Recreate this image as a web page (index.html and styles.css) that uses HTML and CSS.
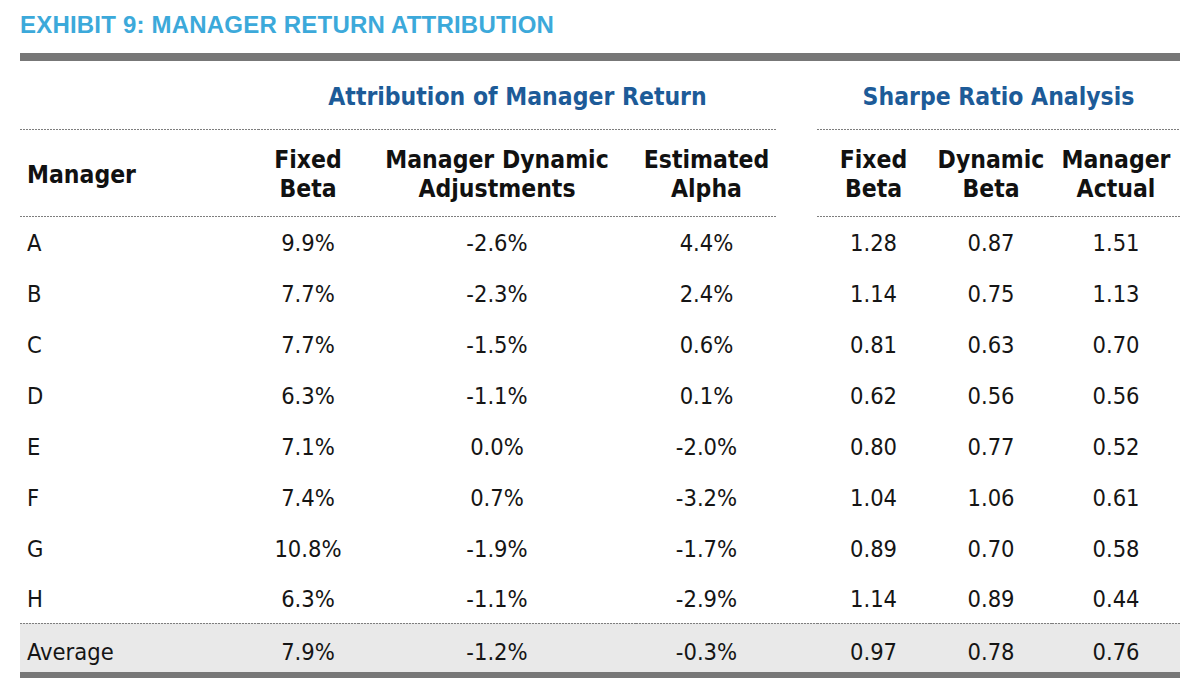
FILE: index.html
```html
<!DOCTYPE html>
<html lang="en">
<head>
<meta charset="utf-8">
<title>Exhibit 9: Manager Return Attribution</title>
<link rel="stylesheet" href="styles.css">
</head>
<body>
<div class="page">
  <h1 class="title">EXHIBIT 9: MANAGER RETURN ATTRIBUTION</h1>
  <table class="exhibit">
    <colgroup>
      <col class="c-name">
      <col class="c-fixed">
      <col class="c-dyn">
      <col class="c-alpha">
      <col class="c-gap">
      <col class="c-sfixed">
      <col class="c-sdyn">
      <col class="c-sact">
    </colgroup>
    <thead>
      <tr class="group-row">
        <th class="lined"></th>
        <th class="group lined" colspan="3">Attribution of Manager Return</th>
        <th></th>
        <th class="group lined" colspan="3">Sharpe Ratio Analysis</th>
      </tr>
      <tr class="col-row">
        <th class="name lined">Manager</th>
        <th class="lined">Fixed<br>Beta</th>
        <th class="lined">Manager Dynamic<br>Adjustments</th>
        <th class="lined">Estimated<br>Alpha</th>
        <th></th>
        <th class="lined">Fixed<br>Beta</th>
        <th class="lined">Dynamic<br>Beta</th>
        <th class="lined">Manager<br>Actual</th>
      </tr>
    </thead>
    <tbody>
      <tr><td class="name">A</td><td>9.9%</td><td>-2.6%</td><td>4.4%</td><td></td><td>1.28</td><td>0.87</td><td>1.51</td></tr>
      <tr><td class="name">B</td><td>7.7%</td><td>-2.3%</td><td>2.4%</td><td></td><td>1.14</td><td>0.75</td><td>1.13</td></tr>
      <tr><td class="name">C</td><td>7.7%</td><td>-1.5%</td><td>0.6%</td><td></td><td>0.81</td><td>0.63</td><td>0.70</td></tr>
      <tr><td class="name">D</td><td>6.3%</td><td>-1.1%</td><td>0.1%</td><td></td><td>0.62</td><td>0.56</td><td>0.56</td></tr>
      <tr><td class="name">E</td><td>7.1%</td><td>0.0%</td><td>-2.0%</td><td></td><td>0.80</td><td>0.77</td><td>0.52</td></tr>
      <tr><td class="name">F</td><td>7.4%</td><td>0.7%</td><td>-3.2%</td><td></td><td>1.04</td><td>1.06</td><td>0.61</td></tr>
      <tr><td class="name">G</td><td>10.8%</td><td>-1.9%</td><td>-1.7%</td><td></td><td>0.89</td><td>0.70</td><td>0.58</td></tr>
      <tr><td class="name">H</td><td>6.3%</td><td>-1.1%</td><td>-2.9%</td><td></td><td>1.14</td><td>0.89</td><td>0.44</td></tr>
    </tbody>
    <tfoot>
      <tr class="avg-row"><td class="name">Average</td><td>7.9%</td><td>-1.2%</td><td>-0.3%</td><td></td><td>0.97</td><td>0.78</td><td>0.76</td></tr>
    </tfoot>
  </table>
</div>
</body>
</html>
```

FILE: styles.css
```css
html, body {
  margin: 0;
  padding: 0;
  background: #ffffff;
}

.page {
  width: 1160px;
  padding: 0 20px;
  font-family: "DejaVu Sans Condensed", "DejaVu Sans", sans-serif;
  color: #151515;
}

.title {
  margin: 0;
  height: 28px;
  padding: 11px 0 14px 0;
  font-family: "Liberation Sans", Arial, sans-serif;
  font-weight: bold;
  font-size: 24px;
  line-height: 28px;
  color: #3ca9da;
  letter-spacing: 0.2px;
}

.exhibit {
  width: 1160px;
  table-layout: fixed;
  border-collapse: separate;
  border-spacing: 0;
  border-top: 8px solid #777777;
  border-bottom: 6px solid #777777;
}

.c-name { width: 238px; }
.c-fixed { width: 100px; }
.c-dyn { width: 278px; }
.c-alpha { width: 141px; }
.c-gap { width: 40px; }
.c-sfixed { width: 113px; }
.c-sdyn { width: 122px; }
.c-sact { width: 128px; }

.exhibit th,
.exhibit td {
  padding: 0;
  text-align: center;
  vertical-align: middle;
}

.lined {
  background-image: repeating-linear-gradient(90deg, #7e7e7e 0 2px, transparent 2px 3px);
  background-size: 100% 1px;
  background-position: left bottom;
  background-repeat: no-repeat;
}

.group-row th {
  height: 69px;
  box-sizing: border-box;
  padding-bottom: 18px;
  vertical-align: bottom;
}

.group {
  font-size: 24.5px;
  line-height: 30px;
  font-weight: bold;
  color: #1d5b98;
}

.col-row th {
  height: 87px;
  box-sizing: border-box;
  padding-top: 1px;
  font-size: 24.5px;
  line-height: 29px;
  font-weight: bold;
  color: #111111;
}

.col-row th.name {
  text-align: left;
  padding-left: 7px;
}

.exhibit tbody td {
  height: 51px;
  box-sizing: border-box;
  font-size: 23.5px;
  line-height: 28px;
  padding-top: 1px;
}

.exhibit tbody tr:last-child td {
  height: 49px;
}

.exhibit td.name {
  text-align: left;
  padding-left: 7px;
}

.avg-row td {
  height: 49px;
  box-sizing: border-box;
  padding-top: 9px;
  font-size: 23.5px;
  line-height: 28px;
  background-color: #e9e9e9;
  background-image: repeating-linear-gradient(90deg, #7e7e7e 0 2px, transparent 2px 3px);
  background-size: 100% 1px;
  background-position: left top;
  background-repeat: no-repeat;
}
```
